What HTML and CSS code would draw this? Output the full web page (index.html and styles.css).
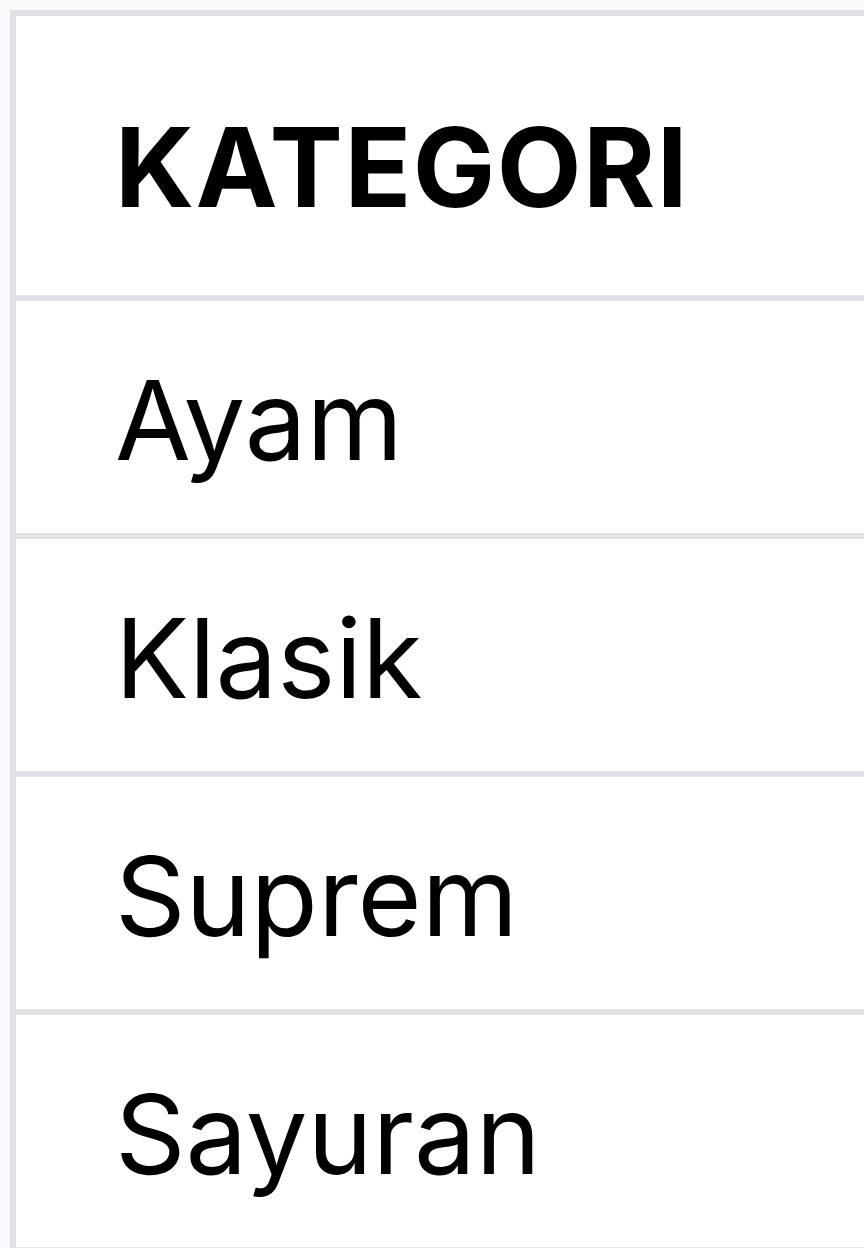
FILE: index.html
```html
<!DOCTYPE html>
<html lang="id">
<head>
<meta charset="utf-8">
<title>Kategori</title>
<link rel="stylesheet" href="styles.css">
</head>
<body>
<div class="page">
  <div class="table">
    <div class="row head"><div class="cell">KATEGORI</div></div>
    <div class="row"><div class="cell">Ayam</div></div>
    <div class="row"><div class="cell">Klasik</div></div>
    <div class="row"><div class="cell">Suprem</div></div>
    <div class="row"><div class="cell">Sayuran</div></div>
  </div>
</div>
</body>
</html>
```
FILE: styles.css
```css
html, body {
  margin: 0;
  padding: 0;
  background: #fafafa;
}
.page {
  padding: 10px 0 0 10px;
  font-family: Inter, "Noto Sans", sans-serif;
  color: #000;
}
.table {
  background: #fff;
  border-top: 6px solid #e1e1e5;
  border-left: 6px solid #e1e1e5;
  display: flex;
  flex-direction: column;
}
.row {
  height: 227px;
  border-bottom: 6px solid #e1e1e5;
  display: flex;
  align-items: center;
  padding-top: 5px;
  box-sizing: content-box;
}
.row.head {
  height: 257px;
  padding-top: 22px;
}
.cell {
  padding-left: 99px;
  font-size: 110px;
  line-height: 1.2;
  font-weight: 400;
}
.head .cell {
  font-weight: 700;
  letter-spacing: 1.5px;
}
```
